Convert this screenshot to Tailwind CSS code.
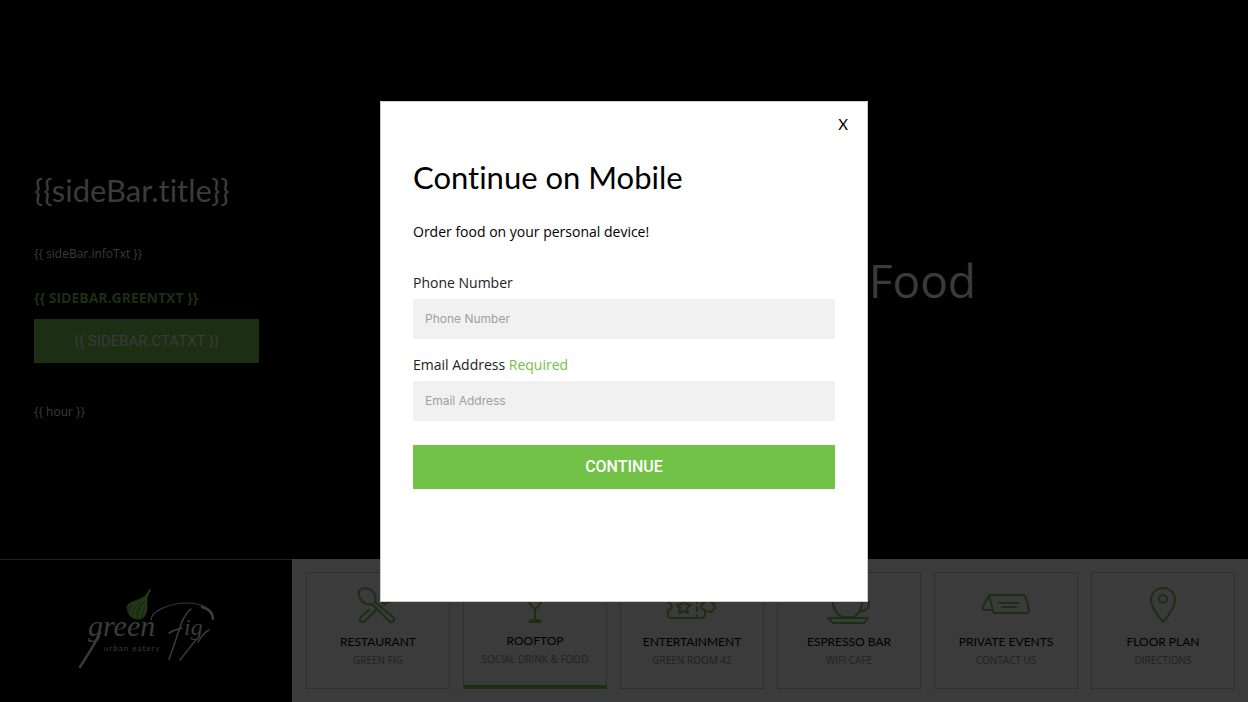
<!DOCTYPE html>
<html lang="en">
<head>
<meta charset="utf-8">
<meta name="viewport" content="width=device-width, initial-scale=1">
<title>Continue on Mobile</title>
<script src="https://cdn.jsdelivr.net/npm/@tailwindcss/browser@4"></script>
</head>
<body class="relative flex min-h-screen flex-col bg-black font-['Open_Sans',sans-serif] text-[#3b3b3b]">
  <main class="flex flex-1">
    <aside class="flex w-[292px] shrink-0 flex-col items-start pr-[33px] pl-[34px] pt-[170px]">
      <h2 class="font-['Lato',sans-serif] text-[31px] leading-10 [font-variant-ligatures:none]">{{sideBar.title}}</h2>
      <p class="mt-[34px] text-xs leading-5">{{ sideBar.infoTxt }}</p>
      <p class="mt-6 text-sm leading-5 font-bold text-[#1c2e13]">{{ SIDEBAR.GREENTXT }}</p>
      <button type="button" class="mt-[11px] h-11 w-full bg-[#1c2e13] font-['Roboto',sans-serif] text-[15px]">{{ SIDEBAR.CTATXT }}</button>
      <p class="mt-[39px] text-xs leading-5">{{ hour }}</p>
    </aside>
    <section class="flex flex-1 items-center justify-end pr-[272px]">
      <h1 class="text-[46px] leading-none">Food</h1>
    </section>
  </main>

  <footer class="flex h-[143px]">
    <div class="flex w-[292px] shrink-0 items-center justify-center border-t border-[#202020] pb-1">
      <svg width="140" height="82" viewBox="0 0 140 82" fill="none" stroke="#3b3b3b" stroke-linecap="round" role="img" aria-label="green Fig urban eatery">
        <path d="M72 6C70 11 71 15 71 20c0 6-3 11-8 11-7 1-12-5-12-12 1-6 13-6 21-13z" fill="#1a2f10" stroke="#1c3511" stroke-width=".8"/>
        <path d="M70 9C60 15 53 20 55 28M70 10C63 16 57 22 59 30M71 11C67 18 64 24 63 31M71 13c-1 6-2 12-4 16M52 18c3-2 6-3 9-4" stroke="#3b4a34" stroke-width=".6"/>
        <path d="M70 9l4-7" stroke="#274019" stroke-width="1.6"/>
        <text x="12" y="48" fill="#3b3b3b" stroke="none" font-family="Liberation Serif, serif" font-style="italic" font-size="30">green</text>
        <path d="M24 44C19 57 12 66 4 79" stroke-width="2.4"/>
        <path d="M75 32c0-8 17-17 36-17 16 0 26 7 26 15" stroke-width="1.2"/>
        <path d="M126 19c7 2 11 6 11 12" stroke-width="2.4"/>
        <path d="M115 21C104 30 103 46 93 71" stroke-width="1.6"/>
        <path d="M93 45c5-3 9-4 13-5" stroke-width="1.6"/>
        <text x="108" y="47" fill="#3b3b3b" stroke="none" font-family="Liberation Serif, serif" font-style="italic" font-size="24">ig</text>
        <path d="M120 52C114 59 108 67 104 72M122 54c4-6 6-10 11-12" stroke-width="1.4"/>
        <text x="28" y="63" fill="#3b3b3b" stroke="none" font-family="Lato, sans-serif" font-size="8" letter-spacing="1">urban eatery</text>
      </svg>
    </div>

    <nav class="grid flex-1 grid-cols-6 gap-[13px] bg-[#3b3b3b] py-[13px] pr-[13px] pl-[14px] text-center font-['Lato',sans-serif] text-xs leading-[18px] text-black">
      <a href="#restaurant" class="flex flex-col items-center border border-[#2e2e2e] pt-3">
        <svg class="mb-2" width="50" height="40" viewBox="0 0 50 40" fill="none" stroke="#1c2e13" stroke-width="2" stroke-linecap="round" stroke-linejoin="round">
          <path d="M7 5c4-4 11-1 14 3 2 3 2 6 1 9l18 15c3 3-1 7-4 4L19 19c-3 1-7 0-10-3-3-4-5-8-2-11zM31 20l4-3q5 0 8-4M16 25L8 32c-3 3 1 7 4 4l12-12M29 18l8-9"/>
        </svg>
        RESTAURANT
        <span class="font-['Open_Sans',sans-serif] text-[10px] text-[#222]">GREEN FIG</span>
      </a>
      <a href="#rooftop" class="flex flex-col items-center border border-b-4 border-[#2e2e2e] border-b-[#1c2e13] pt-[11px]">
        <svg class="mb-2" width="50" height="40" viewBox="0 0 50 40" fill="none" stroke="#1c2e13" stroke-width="2" stroke-linecap="round" stroke-linejoin="round">
          <path d="M16 3h18c0 8-2 15-6 20l-3 2-3-2c-4-5-6-12-6-20zM25 25v10M19 38c2-3 10-3 12 0z"/>
        </svg>
        ROOFTOP
        <span class="font-['Open_Sans',sans-serif] text-[10px] text-[#222]">SOCIAL DRINK &amp; FOOD</span>
      </a>
      <a href="#entertainment" class="flex flex-col items-center border border-[#2e2e2e] pt-3">
        <svg class="mb-2" width="50" height="40" viewBox="0 0 50 40" fill="none" stroke="#1c2e13" stroke-width="2" stroke-linecap="round" stroke-linejoin="round">
          <path d="M2 12h36v5c-5 2-5 7 0 8v4q0 4-3 4H4q-3 0-3-4v-4c5-1 5-6 0-8zM38 28c2-3 4-2 6-1l4-4-1-4c-3-1-3-3-2-5l-3-3"/>
          <path d="m17 15 2 4 5 1-4 3 1 5-4-2-5 2 1-5-3-3 5-1z"/><path d="M30 14v17" stroke-dasharray="4 4"/>
        </svg>
        ENTERTAINMENT
        <span class="font-['Open_Sans',sans-serif] text-[10px] text-[#222]">GREEN ROOM 42</span>
      </a>
      <a href="#espresso" class="flex flex-col items-center border border-[#2e2e2e] pt-3">
        <svg class="mb-2" width="50" height="40" viewBox="0 0 50 40" fill="none" stroke="#1c2e13" stroke-width="2" stroke-linecap="round" stroke-linejoin="round">
          <path d="M9 12h29c1 9-2 16-8 20H18C11 28 8 21 9 12zM38 16c10-2 10 9-3 11M4 33h40l-4 5H9z"/>
        </svg>
        ESPRESSO BAR
        <span class="font-['Open_Sans',sans-serif] text-[10px] text-[#222]">WIFI CAFE</span>
      </a>
      <a href="#events" class="flex flex-col items-center border border-[#2e2e2e] pt-3">
        <svg class="mb-2" width="50" height="40" viewBox="0 0 50 40" fill="none" stroke="#1c2e13" stroke-width="2" stroke-linecap="round" stroke-linejoin="round">
          <path d="M8 10h34q2 0 3 3l3 12q0 3-3 3H14q-2 0-2-2L8 10 2 22q-1 3 2 3h8M18 18h20M21 22h14"/>
        </svg>
        PRIVATE EVENTS
        <span class="font-['Open_Sans',sans-serif] text-[10px] text-[#222]">CONTACT US</span>
      </a>
      <a href="#floorplan" class="flex flex-col items-center border border-[#2e2e2e] pt-3">
        <svg class="mb-2" width="50" height="40" viewBox="0 0 50 40" fill="none" stroke="#1c2e13" stroke-width="2" stroke-linecap="round" stroke-linejoin="round">
          <path d="M25 37C19 30 13 22 13 15a12 12 0 0 1 24 0c0 7-6 15-12 22z"/><circle cx="25" cy="14" r="4"/>
        </svg>
        FLOOR PLAN
        <span class="font-['Open_Sans',sans-serif] text-[10px] text-[#222]">DIRECTIONS</span>
      </a>
    </nav>
  </footer>

  <div class="absolute inset-0 flex items-center justify-center">
    <div role="dialog" aria-modal="true" aria-labelledby="dialog-title" class="w-full max-w-[488px] border border-[#ccc] bg-white px-8 pt-2.5 pb-[112px] text-black">
      <div class="-mr-5 flex justify-end">
        <button type="button" aria-label="Close" class="size-6 font-['Lato',sans-serif] text-[15px] leading-6">X</button>
      </div>
      <h2 id="dialog-title" class="mt-[21px] font-['Lato',sans-serif] text-[31px] leading-10 [font-variant-ligatures:none]">Continue on Mobile</h2>
      <p class="mt-[25px] text-sm leading-5">Order food on your personal device!</p>
      <form class="mt-[31px] flex flex-col text-sm leading-5 text-[#222]">
        <label for="phone">Phone Number</label>
        <input id="phone" type="tel" placeholder="Phone Number" class="mt-[6px] h-10 bg-[#f1f1f1] px-3 font-['Inter',sans-serif] text-xs placeholder:text-[#a0a0a0]">
        <label for="email" class="mt-4">Email Address <span class="text-[#72c247]">Required</span></label>
        <input id="email" type="email" required placeholder="Email Address" class="mt-[6px] h-10 bg-[#f1f1f1] px-3 font-['Inter',sans-serif] text-xs placeholder:text-[#a0a0a0]">
        <button type="submit" class="mt-6 h-11 bg-[#72c247] font-['Roboto',sans-serif] text-base font-medium text-white">CONTINUE</button>
      </form>
    </div>
  </div>
</body>
</html>
